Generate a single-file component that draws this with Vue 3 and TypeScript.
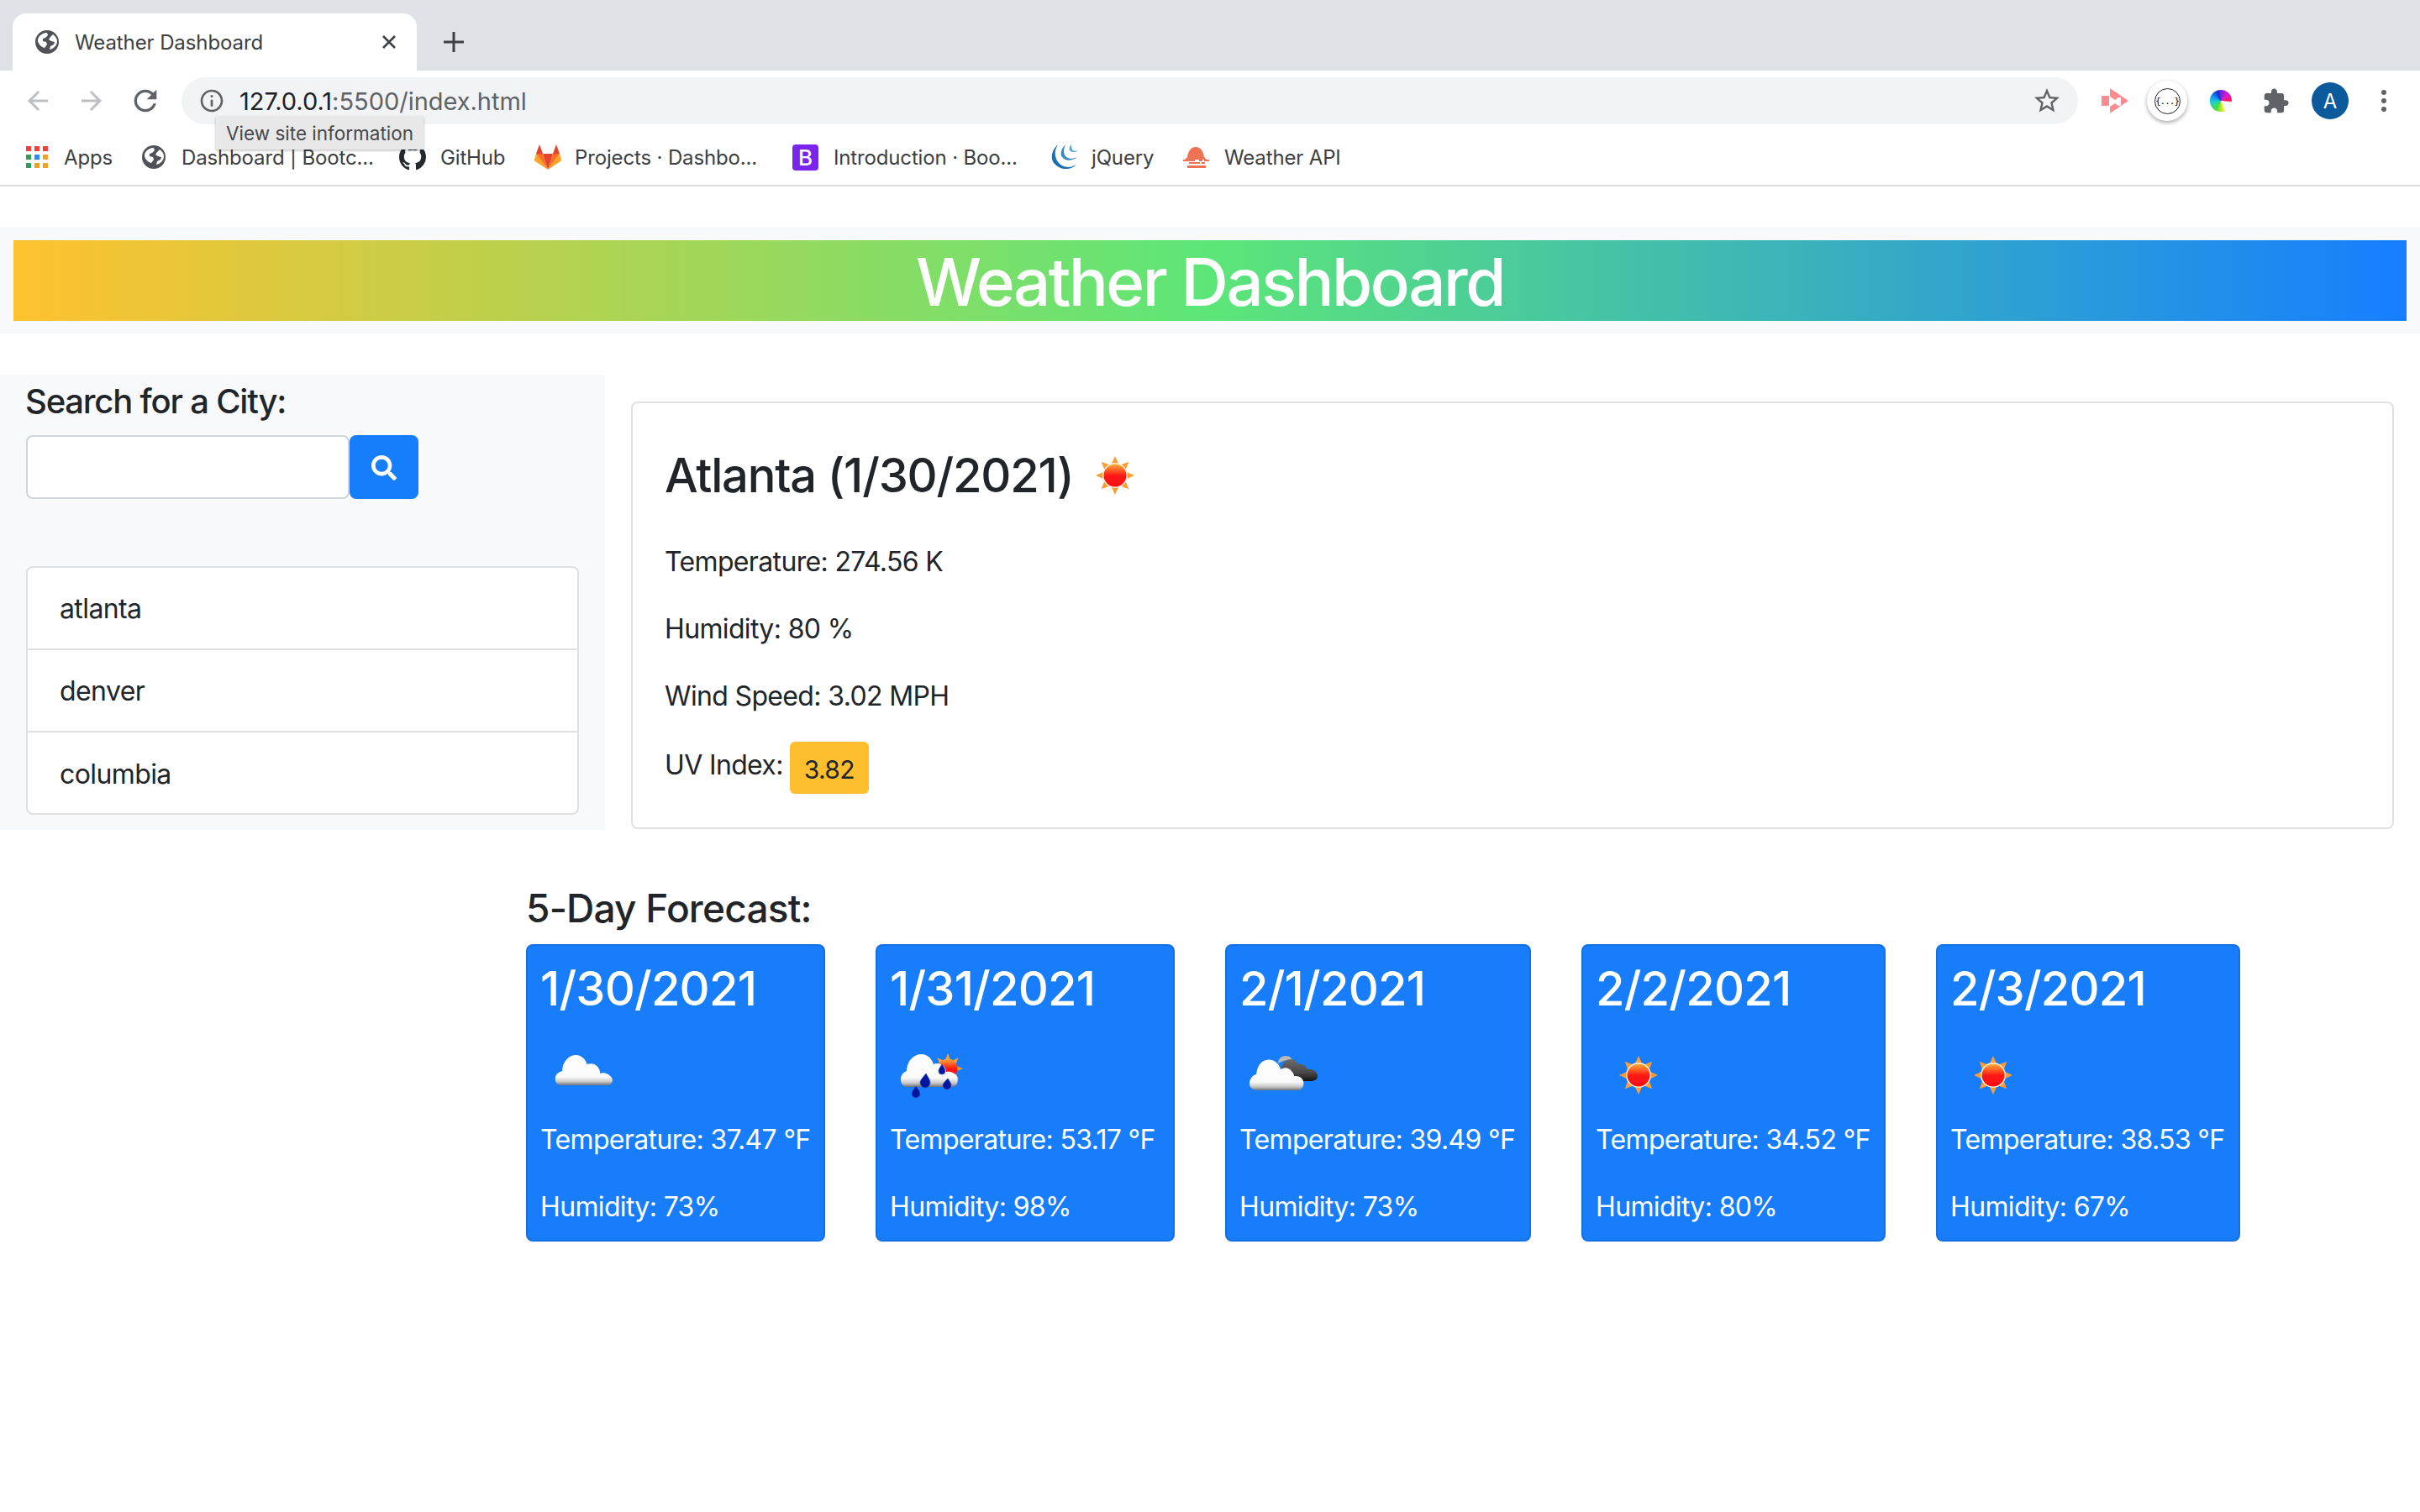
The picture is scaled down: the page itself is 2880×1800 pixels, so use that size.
<script setup lang="ts">
interface Bookmark { label: string; icon: string; width: number; gap: number }
interface Day { date: string; icon: string; temp: string; hum: string }

const bookmarks: Bookmark[] = [
  { label: 'Dashboard | Bootc...', icon: 'globe', width: 226, gap: 19 },
  { label: 'GitHub', icon: 'github', width: 78, gap: 17 },
  { label: 'Projects · Dashbo...', icon: 'gitlab', width: 216, gap: 16 },
  { label: 'Introduction · Boo...', icon: 'boot', width: 219, gap: 18 },
  { label: 'jQuery', icon: 'jquery', width: 73, gap: 15 },
  { label: 'Weather API', icon: 'weather', width: 136, gap: 18 }
]
const cities = ['atlanta', 'denver', 'columbia']
const days: Day[] = [
  { date: '1/30/2021', icon: 'cloud', temp: '37.47', hum: '73' },
  { date: '1/31/2021', icon: 'rain', temp: '53.17', hum: '98' },
  { date: '2/1/2021', icon: 'dark', temp: '39.49', hum: '73' },
  { date: '2/2/2021', icon: 'sun', temp: '34.52', hum: '80' },
  { date: '2/3/2021', icon: 'sun', temp: '38.53', hum: '67' }
]
const rays = [0, 45, 90, 135, 180, 225, 270, 315]
const globe = 'M14 0a14 14 0 1 0 0 28a14 14 0 0 0 0-28zM5 7c2-2 5-4 9-4l1 3-3 3-3 1v3l4 1 1 3-3 4c-4-1-8-5-8-9 0-2 1-4 2-5zm12 16l1-4 4-2 1-3-4-1-3-2 2-3 3-3c3 2 5 5 5 8 0 5-4 9-9 10z'
</script>

<template>
  <div class="screen">
    <div class="tabstrip">
      <div class="tab">
        <svg class="tab-fav" width="28" height="28" viewBox="0 0 28 28"><path fill-rule="evenodd" fill="#4f5359" :d="globe" /></svg>
        <span class="tab-title">Weather Dashboard</span>
        <svg class="tab-close" width="18" height="18" viewBox="0 0 18 18"><path d="M2 2l14 14M16 2L2 16" stroke="#3c4043" stroke-width="2.6" fill="none" /></svg>
      </div>
      <svg class="tab-plus" width="26" height="26" viewBox="0 0 26 26"><path d="M13 1v24M1 13h24" stroke="#3c4043" stroke-width="3" fill="none" /></svg>
    </div>

    <div class="toolbar">
      <svg class="nav back" width="36" height="36" viewBox="0 0 24 24"><path fill="#bdbfc2" d="M20 11H7.83l5.59-5.59L12 4l-8 8 8 8 1.41-1.41L7.83 13H20v-2z" /></svg>
      <svg class="nav fwd" width="36" height="36" viewBox="0 0 24 24"><path fill="#bdbfc2" d="M4 11h12.17l-5.59-5.59L12 4l8 8-8 8-1.41-1.41L16.17 13H4v-2z" /></svg>
      <svg class="nav reload" width="40" height="40" viewBox="0 0 24 24"><path fill="#5f6368" d="M17.65 6.35C16.2 4.9 14.21 4 12 4c-4.42 0-7.99 3.58-7.99 8s3.57 8 7.99 8c3.73 0 6.84-2.55 7.73-6h-2.08c-.82 2.33-3.04 4-5.65 4-3.31 0-6-2.69-6-6s2.69-6 6-6c1.66 0 3.14.69 4.22 1.78L13 11h7V4l-2.35 2.35z" /></svg>
      <div class="omnibox">
        <svg class="info" width="32" height="32" viewBox="0 0 24 24"><path fill="#5f6368" d="M11 7h2v2h-2zm0 4h2v6h-2zm1-9C6.48 2 2 6.48 2 12s4.48 10 10 10 10-4.48 10-10S17.52 2 12 2zm0 18c-4.41 0-8-3.59-8-8s3.59-8 8-8 8 3.59 8 8-3.59 8-8 8z" /></svg>
        <span class="url"><span class="host">127.0.0.1</span>:5500/index.html</span>
        <svg class="star" width="36" height="36" viewBox="0 0 24 24"><path fill="#5f6368" d="M22 9.24l-7.19-.62L12 2 9.19 8.63 2 9.24l5.46 4.73L5.82 21 12 17.27 18.18 21l-1.63-7.03L22 9.24zM12 15.4l-3.76 2.27 1-4.28-3.32-2.88 4.38-.38L12 6.1l1.71 4.04 4.38.38-3.32 2.88 1 4.28L12 15.4z" /></svg>
      </div>
      <svg class="ext-video" width="32" height="30" viewBox="0 0 32 30"><path fill="#ff8a90" d="M0 9h9v12H0zM10 0l22 15-22 15v-8l6-4 4 3h3V11h-3l-4 3-6-4z" /></svg>
      <div class="ext-json"><div class="json-ring">{...}</div></div>
      <div class="ext-wheel"></div>
      <svg class="ext-puzzle" width="33" height="33" viewBox="0 0 24 24"><path fill="#5f6368" d="M20.5 11H19V7c0-1.1-.9-2-2-2h-4V3.5C13 2.12 11.88 1 10.5 1S8 2.12 8 3.5V5H4c-1.1 0-1.99.9-1.99 2v3.8H3.5c1.49 0 2.7 1.21 2.7 2.7s-1.21 2.7-2.7 2.7H2V20c0 1.1.9 2 2 2h3.8v-1.5c0-1.49 1.21-2.7 2.7-2.7 1.49 0 2.7 1.21 2.7 2.7V22H17c1.1 0 2-.9 2-2v-4h1.5c1.38 0 2.5-1.12 2.5-2.5S21.88 11 20.5 11z" /></svg>
      <div class="avatar">A</div>
      <div class="menu"><i></i><i></i><i></i></div>
      <div class="tooltip">View site information</div>
    </div>

    <div class="bookmarks">
      <div class="apps">
        <i class="r"></i><i class="r"></i><i class="r"></i>
        <i class="g"></i><i class="b"></i><i class="o"></i>
        <i class="g"></i><i class="o"></i><i class="o"></i>
      </div>
      <span class="bm-label apps-label">Apps</span>
      <div v-for="b in bookmarks" :key="b.label" class="bm" :class="'bm-' + b.icon">
        <svg v-if="b.icon === 'globe'" width="28" height="30" viewBox="0 0 28 28"><path fill-rule="evenodd" fill="#4f5359" :d="globe" /></svg>
        <svg v-else-if="b.icon === 'github'" width="32" height="32" viewBox="0 0 16 16"><path fill="#24292e" d="M8 0C3.58 0 0 3.58 0 8c0 3.54 2.29 6.53 5.47 7.59.4.07.55-.17.55-.38 0-.19-.01-.82-.01-1.49-2.01.37-2.53-.49-2.69-.94-.09-.23-.48-.94-.82-1.13-.28-.15-.68-.52-.01-.53.63-.01 1.08.58 1.23.82.72 1.21 1.87.87 2.33.66.07-.52.28-.87.51-1.07-1.78-.2-3.64-.89-3.64-3.95 0-.87.31-1.59.82-2.15-.08-.2-.36-1.02.08-2.12 0 0 .67-.21 2.2.82.64-.18 1.32-.27 2-.27.68 0 1.36.09 2 .27 1.53-1.04 2.2-.82 2.2-.82.44 1.1.16 1.92.08 2.12.51.56.82 1.27.82 2.15 0 3.07-1.87 3.75-3.65 3.95.29.25.54.73.54 1.48 0 1.07-.01 1.93-.01 2.2 0 .21.15.46.55.38A8.013 8.013 0 0016 8c0-4.42-3.58-8-8-8z" /></svg>
        <svg v-else-if="b.icon === 'gitlab'" width="32" height="30" viewBox="0 0 32 30">
          <path fill="#e24329" d="M16 30L10 11h12z" />
          <path fill="#fc6d26" d="M16 30L10 11H2zM16 30l6-19h8z" />
          <path fill="#fca326" d="M2 11L0 18c0 1 .3 1.500 1 2l15 10zM30 11l2 7c0 1-.3 1.500-1 2L16 30z" />
          <path fill="#e24329" d="M2 11L6 0l4 11zM30 11L26 0l-4 11z" />
        </svg>
        <div v-else-if="b.icon === 'boot'" class="boot-icon">B</div>
        <svg v-else-if="b.icon === 'jquery'" width="33" height="30" viewBox="0 0 33 30">
          <path fill="#1e6fae" d="M8 0C1 6-2 17 4 23c5 6 15 8 22 4 2-1 3-2 4-3-8 5-17 3-21-2C4 16 3 8 8 0z" />
          <path fill="#3b8bc5" d="M17 0c-5 5-7 11-4 15 4 5 12 5 18 0-6 3-11 2-14-1-3-4-2-9 0-14z" />
          <path fill="#5aa4d6" d="M24 0c-3 3-3 7-1 8 3 2 7 1 9-1-3 1-6 1-7-1-1-2-1-4-1-6z" />
        </svg>
        <svg v-else width="31" height="25" viewBox="0 0 31 25">
          <path fill="#ee7355" d="M15 0c6 0 9 5 10 12l3 3H2l3-3C6 5 9 0 15 0z" />
          <path fill="#ee7355" d="M0 15h14v2H0zM19 15h4v2h-4zM25 15h6v2h-6zM7 18h13v2H7zM22 18h4v2h-4zM5 22h22v3H5z" />
        </svg>
        <span class="bm-label" :style="{ width: b.width + 'px', marginLeft: b.gap + 'px' }">{{ b.label }}</span>
      </div>
    </div>

    <header class="jumbo">
      <h1 class="banner">Weather Dashboard</h1>
    </header>

    <div class="row">
      <aside class="sidebar">
        <h4 class="search-title">Search for a City:</h4>
        <div class="search">
          <input class="search-input" type="text" />
          <button class="search-btn" type="button">
            <svg width="30" height="30" viewBox="0 0 512 512"><path fill="#fff" d="M505 442.7L405.3 343c-4.5-4.5-10.6-7-17-7H372c27.6-35.3 44-79.7 44-128C416 93.1 322.9 0 208 0S0 93.1 0 208s93.1 208 208 208c48.3 0 92.7-16.4 128-44v16.3c0 6.400 2.500 12.500 7 17l99.700 99.700c9.400 9.400 24.600 9.400 33.900 0l28.300-28.300c9.400-9.400 9.400-24.600.1-34zM208 336c-70.700 0-128-57.200-128-128 0-70.700 57.200-128 128-128 70.700 0 128 57.200 128 128 0 70.700-57.200 128-128 128z" /></svg>
          </button>
        </div>
        <ul class="cities">
          <li v-for="c in cities" :key="c" class="city">{{ c }}</li>
        </ul>
      </aside>

      <section class="current">
        <div class="current-title">
          <h2 class="city-name">Atlanta (1/30/2021)</h2>
          <svg class="current-icon" width="100" height="100" viewBox="0 0 100 100">
            <defs>
              <linearGradient id="sunA" x1="0" y1="0" x2="0" y2="1"><stop offset="0" stop-color="#ffb03a" /><stop offset=".5" stop-color="#ff1a14" /><stop offset="1" stop-color="#fb0d18" /></linearGradient>
              <filter id="soft" x="-10%" y="-10%" width="120%" height="120%"><feGaussianBlur stdDeviation=".7" /></filter>
            </defs>
            <g filter="url(#soft)">
              <polygon v-for="r in rays" :key="r" points="50,27 55,38 45,38" fill="#ff9d33" :transform="`rotate(${r} 50 50)`" />
              <circle cx="50" cy="50" r="15" fill="#fff1d8" />
              <circle cx="50" cy="50" r="13.500" fill="url(#sunA)" />
            </g>
          </svg>
        </div>
        <p class="stat">Temperature: 274.56 K</p>
        <p class="stat">Humidity: 80 %</p>
        <p class="stat">Wind Speed: 3.02 MPH</p>
        <p class="stat uv">UV Index: <span class="uv-badge">3.82</span></p>
      </section>
    </div>

    <section class="forecast">
      <h4 class="forecast-title">5-Day Forecast:</h4>
      <div class="cards">
        <article v-for="d in days" :key="d.date" class="card">
          <h3 class="card-date">{{ d.date }}</h3>
          <svg class="card-icon" width="100" height="100" viewBox="0 0 100 100">
            <defs>
              <linearGradient id="cloudW" x1="0" y1="0" x2="0" y2="1"><stop offset="0" stop-color="#fff" /><stop offset=".72" stop-color="#fafafa" /><stop offset=".88" stop-color="#c8c8c8" /><stop offset="1" stop-color="#6f7378" /></linearGradient>
              <linearGradient id="cloudD" x1="0" y1="0" x2="0" y2="1"><stop offset="0" stop-color="#6a6a6a" /><stop offset=".6" stop-color="#4a4a4a" /><stop offset="1" stop-color="#151515" /></linearGradient>
              <linearGradient id="sunB" x1="0" y1="0" x2="0" y2="1"><stop offset="0" stop-color="#ffb03a" /><stop offset=".5" stop-color="#ff1a14" /><stop offset="1" stop-color="#fb0d18" /></linearGradient>
              <filter id="softC" x="-10%" y="-10%" width="120%" height="120%"><feGaussianBlur stdDeviation=".7" /></filter>
            </defs>
            <g filter="url(#softC)">
              <template v-if="d.icon === 'cloud'">
                <path fill="url(#cloudW)" transform="translate(1 0) scale(1.05 1)" d="M22 62c-5 0-7-4-7-8 0-5 4-8 8-9 0-4 1-10 6-15 5-5 13-5 17-1 3 2 4 5 5 8 5-2 10 0 12 3 2 3 3 5 3 8 2-1 6-1 9 1 5 3 6 8 4 10-1 2-3 3-5 3z" />
              </template>
              <template v-else-if="d.icon === 'rain'">
                <polygon v-for="r in rays" :key="r" points="68,24 71,32 65,32" fill="#ffa12e" :transform="`rotate(${r} 68 42)`" />
                <circle cx="68" cy="42" r="11.500" fill="url(#sunB)" />
                <path fill="url(#cloudW)" d="M20 64c-6 0-8-5-8-9 0-6 4-9 7-10 0-5 2-12 7-16 6-5 14-5 19-1 3 2 5 6 6 9 4-2 9-1 12 2 2 2 3 5 3 7 5-1 11 1 13 6 2 5 0 11-5 12z" />
                <path fill="#05129e" stroke="#3554c4" stroke-width=".8" d="M42 48c3 5 5 8 5 11a6 6 0 0 1-12 0c0-3 3-6 7-11zM61 37c2 3 4 6 4 8a4 4 0 0 1-8 0c0-2 2-5 4-8zM68 54c2 3 4 6 4 8a5 5 0 0 1-10 0c0-2 3-5 6-8zM30 63c2 3 5 6 5 9a5 5 0 0 1-10 0c0-3 3-6 5-9z" />
              </template>
              <template v-else-if="d.icon === 'dark'">
                <path fill="#b8b8b8" d="M45 36c0-6 5-9 9-9 5 0 8 3 8 6-6-2-12 0-17 3z" />
                <path fill="url(#cloudD)" d="M48 55c0-15 3-24 12-24 4 0 7 2 9 6 4-1 9 1 10 5l3 1 2 0c5 1 8 4 8 8 0 4-3 5-6 6H60z" />
                <path fill="url(#cloudW)" d="M20 68c-6 0-9-4-9-8 0-6 4-10 8-11 1-6 2-10 6-14 6-5 14-4 18 0 3 2 4 5 5 8 2-1 6-3 9-1 4 2 7 6 7 9 3 0 8 0 10 4 2 3 2 8-1 11-1 1-2 2-4 2z" />
              </template>
              <template v-else>
                <polygon v-for="r in rays" :key="r" points="50,27 55,38 45,38" fill="#ff9d33" :transform="`rotate(${r} 50 50)`" />
                <circle cx="50" cy="50" r="15" fill="#fff1d8" />
                <circle cx="50" cy="50" r="13.500" fill="url(#sunB)" />
              </template>
            </g>
          </svg>
          <p class="card-text">Temperature: {{ d.temp }} °F</p>
          <p class="card-text">Humidity: {{ d.hum }}%</p>
        </article>
      </div>
    </section>
  </div>
</template>

<style>
html, body { margin: 0; background: #fff; }
</style>

<style scoped>
* { box-sizing: border-box; }
.screen {
  width: 2880px;
  height: 1800px;
  overflow: hidden;
  background: #fff;
  font-family: Inter, "Liberation Sans", sans-serif;
  color: #212529;
}
.tabstrip {
  height: 84px;
  background: #dee1e6;
  padding: 16px 0 0 15px;
  display: flex;
  align-items: flex-start;
}
.tab {
  width: 481px;
  height: 68px;
  background: #fff;
  border-radius: 16px 16px 0 0;
  display: flex;
  align-items: center;
  padding-left: 27px;
}
.tab-title { margin-left: 19px; font-size: 24px; letter-spacing: -.1px; color: #3c4043; width: 366px; white-space: nowrap; flex: none; }
.tab-close { flex: none; margin-left: -1px; }
.tab-plus { margin: 21px 0 0 31px; }

.toolbar {
  position: relative;
  height: 70px;
  display: flex;
  align-items: center;
  padding-top: 2px;
}
.nav { flex: none; }
.back { margin-left: 27px; }
.fwd { margin-left: 28px; }
.reload { margin-left: 26px; }
.omnibox {
  margin-left: 23px;
  width: 2257px;
  height: 56px;
  border-radius: 28px;
  background: #f1f3f4;
  display: flex;
  align-items: center;
  padding-left: 20px;
  flex: none;
}
.url { margin-left: 17px; font-size: 29px; color: #5f6368; white-space: nowrap; letter-spacing: -.02px; }
.host { color: #202124; }
.star { margin-left: auto; margin-right: 19px; }
.ext-video { margin-left: 28px; flex: none; }
.ext-json {
  margin-left: 22px;
  width: 48px;
  height: 48px;
  border-radius: 50%;
  background: #fff;
  box-shadow: 0 2px 5px rgba(0, 0, 0, .35);
  display: flex;
  align-items: center;
  justify-content: center;
  flex: none;
}
.json-ring {
  width: 31px;
  height: 31px;
  border: 1.500px solid #222;
  border-radius: 50%;
  font: 11px "DejaVu Sans Mono", monospace;
  color: #111;
  display: flex;
  align-items: center;
  justify-content: center;
  letter-spacing: -1px;
}
.ext-wheel {
  margin-left: 27px;
  width: 26px;
  height: 26px;
  border-radius: 50%;
  flex: none;
  background: conic-gradient(from 0deg, #7b20e0 0deg, #e01ad0 50deg, #f01a50 90deg, #fff 100deg, #fff 150deg, #e8f020 165deg, #40e040 210deg, #20d0d0 260deg, #1090f0 300deg, #1030d0 340deg, #7b20e0 360deg);
  box-shadow: 0 0 1px rgba(0, 0, 0, .4);
}
.ext-puzzle { margin-left: 36px; flex: none; }
.avatar {
  margin-left: 26px;
  width: 44px;
  height: 44px;
  border-radius: 50%;
  background: #0b5a9c;
  color: #fff;
  font-size: 24px;
  display: flex;
  align-items: center;
  justify-content: center;
  flex: none;
}
.menu { margin-left: 39px; display: flex; flex-direction: column; gap: 4px; flex: none; }
.menu i { width: 6px; height: 6px; border-radius: 50%; background: #5f6368; display: block; }
.tooltip {
  position: absolute;
  left: 257px;
  top: 55px;
  width: 247px;
  height: 39px;
  background: #e8e8e8;
  color: #45484c;
  font-size: 22.500px;
  display: flex;
  align-items: center;
  justify-content: center;
  box-shadow: 0 1px 3px rgba(0, 0, 0, .3);
  z-index: 3;
  white-space: nowrap;
}

.bookmarks {
  height: 68px;
  border-bottom: 2px solid #dcdce0;
  display: flex;
  align-items: center;
  padding-left: 31px;
}
.apps { display: grid; grid-template-columns: repeat(3, 6px); gap: 4px; flex: none; }
.apps i { display: block; width: 6px; height: 6px; }
.apps .r { background: #f73c3c; }
.apps .g { background: #2f9e5b; }
.apps .b { background: #2a8cf2; }
.apps .o { background: #f0a024; }
.bm { display: flex; align-items: center; flex: none; }
.bm svg { flex: none; display: block; }
.bm-label { font-size: 24px; letter-spacing: -.15px; color: #3c4043; white-space: nowrap; flex: none; }
.apps-label { margin-left: 19px; width: 56px; margin-right: 37px; }
.bm-github { margin-left: 33px; }
.bm-gitlab { margin-left: 34px; }
.bm-boot { margin-left: 43px; }
.bm-jquery { margin-left: 40px; }
.bm-weather { margin-left: 36px; }
.boot-icon {
  width: 31px;
  height: 31px;
  border-radius: 4px;
  background: #7a24ee;
  color: #fff;
  font-size: 26px;
  font-weight: 500;
  display: flex;
  align-items: center;
  justify-content: center;
}

.jumbo {
  margin-top: 48px;
  height: 127px;
  padding: 16px 16px 15px;
  background: #f8f9fa;
}
.banner {
  margin: 0;
  height: 96px;
  line-height: 100px;
  text-align: center;
  font-size: 78px;
  font-weight: 500;
  letter-spacing: -2.500px;
  color: #fff;
  background: linear-gradient(to right, #ffc12e 0%, #5ce678 50%, #167eff 100%);
}

.row { display: flex; align-items: flex-start; margin-top: 49px; }
.sidebar {
  width: 720px;
  height: 542px;
  background: #f8f9fa;
  padding: 0 31px;
  flex: none;
}
.search-title {
  margin: 0 0 0 -1px;
  padding-top: 6px;
  height: 72px;
  line-height: 52px;
  font-size: 40px;
  font-weight: 500;
  letter-spacing: -1.200px;
  white-space: nowrap;
}
.search { display: flex; height: 76px; }
.search-input {
  width: 385px;
  height: 76px;
  border: 2px solid #ced4da;
  border-radius: 8px;
  background: #fff;
  outline: none;
}
.search-btn {
  width: 82px;
  height: 76px;
  border: none;
  border-radius: 8px;
  background: #167efb;
  display: flex;
  align-items: center;
  justify-content: center;
  padding: 2px 0 0;
}
.cities {
  list-style: none;
  margin: 80px 0 0;
  padding: 0;
  width: 658px;
  height: 296px;
  background: #fff;
  border: 2px solid #dfe0e1;
  border-radius: 8px;
}
.city {
  height: 98px;
  padding-left: 38px;
  display: flex;
  align-items: center;
  font-size: 32px;
  letter-spacing: -.6px;
  border-bottom: 2px solid #dfe0e1;
}
.city:last-child { border-bottom: none; }

.current {
  margin: 32px 0 0 31px;
  width: 2098px;
  height: 509px;
  border: 2px solid #dfe0e1;
  border-radius: 8px;
  padding: 0 38px 0 40px;
  flex: none;
}
.current-title { display: flex; align-items: center; height: 149px; padding-top: 23px; margin-left: -2px; }
.city-name { margin: 0; font-size: 56px; font-weight: 500; letter-spacing: -1.200px; white-space: nowrap; }
.current-icon { margin-left: 0; flex: none; }
.stat {
  margin: 0 0 0 -2px;
  height: 80px;
  line-height: 80px;
  font-size: 32px;
  letter-spacing: -.65px;
  white-space: nowrap;
}
.uv { display: flex; align-items: center; height: 84px; }
.uv-badge {
  margin-left: 8px;
  width: 94px;
  height: 62px;
  border-radius: 6px;
  background: #febf2f;
  display: flex;
  align-items: center;
  justify-content: center;
  font-size: 30px;
  padding-top: 4px;
  position: relative;
  top: 3px;
}

.forecast { margin: 0 0 0 626px; }
.forecast-title {
  margin: 0;
  padding-top: 67px;
  height: 136px;
  line-height: 52px;
  font-size: 46px;
  font-weight: 500;
  letter-spacing: -.8px;
  white-space: nowrap;
}
.cards {
  display: grid;
  grid-template-columns: 356px 356px 364px 362px 362px;
  gap: 60px;
}
.card {
  height: 354px;
  background: #177dfb;
  border: 2px solid #1470e0;
  border-radius: 8px;
  padding: 16px 0 0 15px;
  color: #fff;
}
.card-date {
  margin: 0;
  height: 88px;
  line-height: 70px;
  font-size: 56px;
  font-weight: 500;
  letter-spacing: -.8px;
  white-space: nowrap;
}
.card-icon { display: block; margin-left: 1px; }
.card-text {
  margin: 0;
  height: 80px;
  line-height: 54px;
  font-size: 32px;
  letter-spacing: -.65px;
  white-space: nowrap;
}
</style>
